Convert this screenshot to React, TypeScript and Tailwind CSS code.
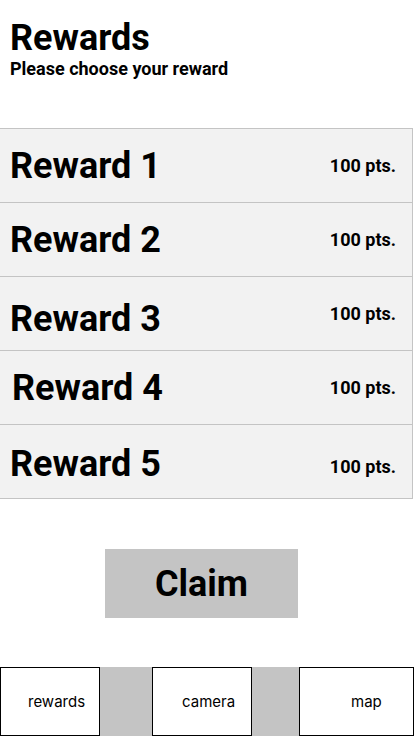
import React from "react";

const rewards = [
  { name: "Reward 1", pts: "100 pts.", nameCls: "pl-[10px]", ptsCls: "" },
  { name: "Reward 2", pts: "100 pts.", nameCls: "pl-[10px]", ptsCls: "" },
  { name: "Reward 3", pts: "100 pts.", nameCls: "pl-[10px] pt-[10px]", ptsCls: "" },
  { name: "Reward 4", pts: "100 pts.", nameCls: "pl-[12px]", ptsCls: "" },
  { name: "Reward 5", pts: "100 pts.", nameCls: "pl-[10px] pt-[4px]", ptsCls: "pt-[10px]" },
];

export default function App() {
  return (
    <div
      className="w-[414px] h-[736px] bg-white flex flex-col overflow-hidden text-black"
      style={{ fontFamily: "Roboto, 'Liberation Sans', sans-serif" }}
    >
      <div className="pl-[10px] pt-[18px]">
        <div className="text-[36px] font-bold leading-[40px]">Rewards</div>
        <div className="mt-[2px] text-[18px] font-bold leading-[18px]">Please choose your reward</div>
      </div>

      <div className="mt-[50px] flex flex-col border-t border-[#c4c4c4] w-[413px]">
        {rewards.map((r) => (
          <div
            key={r.name}
            className="h-[74px] bg-[#f2f2f2] border-b border-r border-[#c4c4c4] flex items-center justify-between pr-[16px]"
          >
            <div className={"text-[36px] font-bold " + r.nameCls}>{r.name}</div>
            <div className={"text-[18px] font-bold " + r.ptsCls}>{r.pts}</div>
          </div>
        ))}
      </div>

      <div className="flex justify-center mt-[50px] pr-[11px]">
        <button className="w-[193px] h-[69px] bg-[#c4c4c4] text-[36px] font-bold">Claim</button>
      </div>

      <div className="mt-auto flex h-[69px] text-[15px]" style={{ fontFamily: "Inter, sans-serif" }}>
        <div className="w-[100px] border border-black flex items-center pl-[27px] pt-[2px]">rewards</div>
        <div className="w-[52px] bg-[#c4c4c4]" />
        <div className="w-[100px] border border-black flex items-center pl-[29px] pt-[2px]">camera</div>
        <div className="w-[47px] bg-[#c4c4c4]" />
        <div className="flex-1 border border-black flex items-center pl-[51px] pt-[2px]">map</div>
      </div>
    </div>
  );
}
